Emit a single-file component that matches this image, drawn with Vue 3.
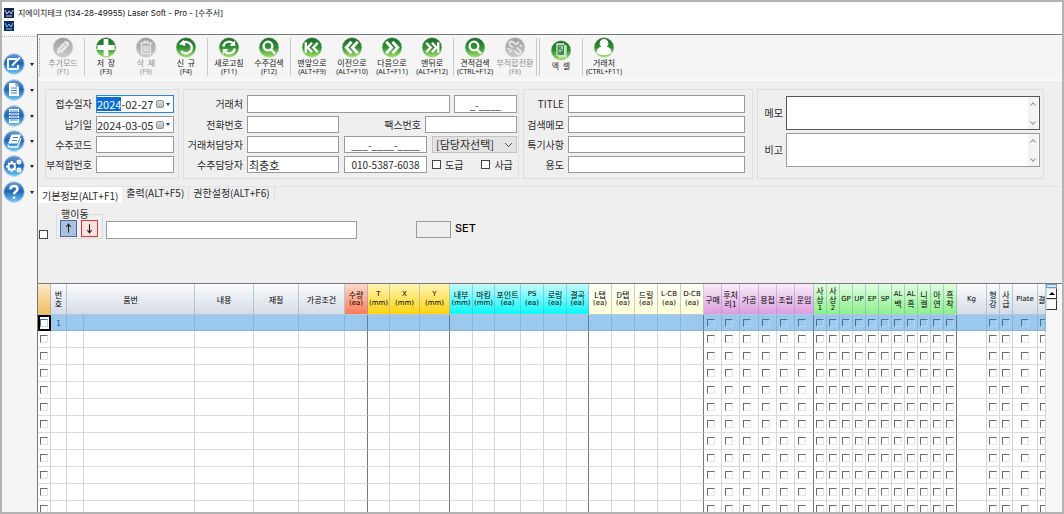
<script setup>
import { onMounted, ref } from 'vue'

const G = 'green'
const X = 'grey'
const tools = [
  { icon: 'pencil', tone: X, name: '추가모드', key: '(F1)' },
  { sep: 1 },
  { icon: 'plus', tone: G, name: '저  장', key: '(F3)' },
  { icon: 'trash', tone: X, name: '삭  제', key: '(F9)' },
  { icon: 'undo', tone: G, name: '신  규', key: '(F4)' },
  { sep: 1 },
  { icon: 'refresh', tone: G, name: '새로고침', key: '(F11)' },
  { icon: 'search', tone: G, name: '수주검색', key: '(F12)' },
  { sep: 1 },
  { icon: 'first', tone: G, name: '맨앞으로', key: '(ALT+F9)' },
  { icon: 'prev', tone: G, name: '이전으로', key: '(ALT+F10)' },
  { icon: 'next', tone: G, name: '다음으로', key: '(ALT+F11)' },
  { icon: 'last', tone: G, name: '맨뒤로', key: '(ALT+F12)' },
  { sep: 1 },
  { icon: 'search', tone: G, name: '견적검색', key: '(CTRL+F12)' },
  { icon: 'link', tone: X, name: '부적합전환', key: '(F8)' },
  { sep: 2 },
  { icon: 'excel', tone: G, name: '엑  셀', key: '' },
  { sep: 1 },
  { icon: 'user', tone: G, name: '거래처', key: '(CTRL+F11)' }
]

const glyphs = {
  pencil: { fill: 'M4.500 17.500 L5.500 12 L13 4.500 Q14.500 3.500 16.500 5.500 Q18.500 7.500 17.500 9 L10 16.500 Z', line: 'M12 6 L16 10 M8 13.500 L13 8.500', dark: true },
  plus: { fill: 'M8.500 2 H13.500 V8.500 H20 V13.500 H13.500 V20 H8.500 V13.500 H2 V8.500 H8.500 Z' },
  trash: { stroke: 'M4.500 6.500 H17.500 M9 6 V4.500 H13 V6 M6.500 7 V17.500 H15.500 V7 M9 9 V15.500 M11 9 V15.500 M13 9 V15.500', width: 1.4 },
  undo: { stroke: 'M8 6 A6 6 0 1 1 6 14.500', width: 2.6, fill: 'M3.500 7.500 L9 2.500 L10.500 9.500 Z' },
  refresh: { stroke: 'M5 10 A6 6 0 0 1 15 6.500 M17 12 A6 6 0 0 1 7 15.500', width: 2.4, fill: 'M17.500 3.500 V9.500 H11.500 Z M4.500 18.500 V12.500 H10.500 Z' },
  search: { stroke: 'M14.500 9.500 A4.600 4.600 0 1 1 5.300 9.500 A4.600 4.600 0 1 1 14.500 9.500 M13 13 L17.500 17.500', width: 2.4 },
  first: { stroke: 'M11 6 L6.500 11 L11 16 M17 6 L12.500 11 L17 16 M4.500 5.500 V16.500', width: 2.5 },
  prev: { stroke: 'M10.500 5 L5 11 L10.500 17 M17 5 L11.500 11 L17 17', width: 3 },
  next: { stroke: 'M11.500 5 L17 11 L11.500 17 M5 5 L10.500 11 L5 17', width: 3 },
  last: { stroke: 'M11 6 L15.500 11 L11 16 M5 6 L9.500 11 L5 16 M17.500 5.500 V16.500', width: 2.5 },
  link: { stroke: 'M8.500 11 L5.500 8 Q4.500 5 7 4.500 Q9 4.500 12 8 M10 14 L14 18 Q17.500 18 17 15 L13 11 M15 5 L12.500 8 M5 16 L8 13.500 M16 9 H18.500 M3.500 12.500 H6', width: 1.8 },
  excel: { fill: 'M6 3.500 H14.500 V5.500 H17 V18.500 H8 V16.500 H6 Z', line: 'M8 6 H13.500 V15 H8 Z M8.500 7 L11 10.500 M11 7 L8.500 10.500 M8.500 12.500 H13 M12 9 V14 M8.500 14 H13', dark: true },
  user: { fill: 'M11 2 A4.600 4.600 0 0 1 13.800 10.200 Q19 11 19 17 Q11 21 3 17 Q3 11 8.200 10.200 A4.600 4.600 0 0 1 11 2 Z' }
}

const menus = [
  { name: '작성', fill: '', stroke: 'M14 6 H6 Q5 6 5 7 V15 Q5 16 6 16 H14 Q15 16 15 15 V12 M9 12.500 L17 4.500', width: 2 },
  { name: '문서', fill: 'M6 4 H13 L16 7 V17 H6 Z', line: 'M8 9 H14 M8 11.500 H14 M8 14 H14 M13 4 V7 H16' },
  { name: '업체', fill: 'M6 4 H16 V18 H6 Z', line: 'M8 5 V16 M10 5 V16 M12 5 V16 M14 5 V16 M6 7.500 H16 M6 10.500 H16 M6 13.500 H16' },
  { name: '장부', fill: 'M8.500 4.500 H18 L14.500 13.500 H5 Z', stroke: 'M5 14.500 Q5 17 7 17 H14.500 L18 8', line: 'M10 7.500 H15 M9 10.500 H14', width: 1.3 },
  { name: '설정', stroke: 'M12 11.500 A3.300 3.300 0 1 1 5.400 11.500 A3.300 3.300 0 1 1 12 11.500 M17.500 7 A1.500 1.500 0 1 1 14.500 7 A1.500 1.500 0 1 1 17.500 7 M17.500 15 A1.500 1.500 0 1 1 14.500 15 A1.500 1.500 0 1 1 17.500 15 M8.700 6 V8 M8.700 15 V17 M3 11.500 H5 M5 8 L6.500 9.300 M5 15 L6.500 13.700 M12.500 8 L11 9.300 M12.500 15 L11 13.700', width: 2 },
  { name: '도움말', stroke: 'M7.500 8.500 Q7.500 5 11 5 Q14.500 5 14.500 8 Q14.500 9.500 12.500 10.800 Q11 11.800 11 13.300 M11 15.500 V17.800', width: 2.5 }
]

const cols = [
  { w: 13, t: [], c: 'amber', box: 1 },
  { w: 16, t: ['번', '호'] },
  { t: ['품번'], span: 2 },
  { w: 59, t: ['내용'] },
  { w: 45, t: ['재질'] },
  { w: 46, t: ['가공조건'] },
  { w: 23, t: ['수량', '(ea)'], c: 'red', end: 1 },
  { w: 22, t: ['T', '(mm)'], c: 'yellow' },
  { w: 30, t: ['X', '(mm)'], c: 'yellow' },
  { w: 30, t: ['Y', '(mm)'], c: 'yellow', end: 1 },
  { w: 23, t: ['내부', '(mm)'], c: 'cyan' },
  { w: 22, t: ['마킹', '(mm)'], c: 'cyan' },
  { w: 26, t: ['포인트', '(ea)'], c: 'cyan' },
  { w: 23, t: ['PS', '(ea)'], c: 'cyan' },
  { w: 23, t: ['로링', '(ea)'], c: 'cyan' },
  { w: 22, t: ['결곡', '(ea)'], c: 'cyan', end: 1 },
  { w: 23, t: ['L탭', '(ea)'], c: 'cream' },
  { w: 23, t: ['D탭', '(ea)'], c: 'cream' },
  { w: 23, t: ['드릴', '(ea)'], c: 'cream' },
  { w: 23, t: ['L-CB', '(ea)'], c: 'cream' },
  { w: 23, t: ['D-CB', '(ea)'], c: 'cream', end: 1 },
  { w: 18, t: ['구매'], c: 'violet', box: 1 },
  { w: 18, t: ['후처', '리1'], c: 'violet', box: 1 },
  { w: 19, t: ['가공'], c: 'violet', box: 1 },
  { w: 18, t: ['용접'], c: 'violet', box: 1 },
  { w: 18, t: ['조립'], c: 'violet', box: 1 },
  { w: 19, t: ['운임'], c: 'violet', box: 1, end: 1 },
  { w: 13, t: ['사', '상', '1'], c: 'lime', box: 1 },
  { w: 13, t: ['사', '상', '2'], c: 'lime', box: 1 },
  { w: 13, t: ['GP'], c: 'lime', box: 1 },
  { w: 13, t: ['UP'], c: 'lime', box: 1 },
  { w: 13, t: ['EP'], c: 'lime', box: 1 },
  { w: 13, t: ['SP'], c: 'lime', box: 1 },
  { w: 13, t: ['AL', '백'], c: 'lime', box: 1 },
  { w: 13, t: ['AL', '흑'], c: 'lime', box: 1 },
  { w: 13, t: ['니', '켈'], c: 'lime', box: 1 },
  { w: 13, t: ['아', '연'], c: 'lime', box: 1 },
  { w: 13, t: ['흑', '착'], c: 'lime', box: 1, end: 1 },
  { w: 30, t: ['Kg'] },
  { w: 13, t: ['형', '강'], box: 1 },
  { w: 13, t: ['사', '급'], box: 1 },
  { w: 25, t: ['Plate'], box: 1, mid: 1 },
  { w: 8, t: ['결'], box: 1, cut: 1 }
]
const isLatin = (s) => /^[\x20-\x7e]+$/.test(s)
const colStyle = (c) => (c.w ? { width: c.w + 'px' } : null)

const specs = ['TITLE', '검색메모', '특기사항', '용도']
const tabs = ['기본정보(ALT+F1)', '출력(ALT+F5)', '권한설정(ALT+F6)']

const received = ref('2024-02-27')
const due = ref('2024-03-05')
const receivedBox = ref(null)
onMounted(() => {
  receivedBox.value.focus()
  receivedBox.value.setSelectionRange(0, 4)
})
</script>

<template>
  <div class="window">
    <svg class="defs" width="0" height="0" aria-hidden="true">
      <defs>
        <linearGradient id="green" x1="0" y1="0" x2="0" y2="1">
          <stop offset="0" stop-color="#1d6a2d" /><stop offset=".5" stop-color="#2f9034" /><stop offset="1" stop-color="#a5e26a" />
        </linearGradient>
        <linearGradient id="grey" x1="0" y1="0" x2="0" y2="1">
          <stop offset="0" stop-color="#9d9d9d" /><stop offset="1" stop-color="#cccccc" />
        </linearGradient>
        <linearGradient id="blue" x1="0" y1="0" x2="0" y2="1">
          <stop offset="0" stop-color="#6f9fd4" /><stop offset=".45" stop-color="#1e63b4" /><stop offset="1" stop-color="#6fcdf8" />
        </linearGradient>
      </defs>
    </svg>

    <header class="titlebar">
      <div class="title">
        <svg class="app" viewBox="0 0 10 10"><rect width="10" height="10" fill="#14264f" /><path d="M1 2 L3 6 L5 3 L7 6 L9 2 M2 8 H8" stroke="#b9d3f5" stroke-width="1" fill="none" /></svg>
        <h1>지에이치테크 (134-28-49955) Laser Soft - Pro - [수주서]</h1>
      </div>
      <svg class="app" viewBox="0 0 10 10"><rect width="10" height="10" fill="#0d2c62" /><path d="M1 2 L3 6 L5 3 L7 6 L9 2 M2 8 H8" stroke="#7fc4f5" stroke-width="1" fill="none" /></svg>
    </header>

    <div class="body">
      <nav class="side">
        <button v-for="m in menus" :key="m.name" type="button" :aria-label="m.name">
          <svg class="orb" viewBox="0 0 22 22">
            <circle cx="11" cy="11" r="10.400" fill="url(#blue)" stroke="#c4d7ec" stroke-width="1" />
            <path v-if="m.fill" :d="m.fill" fill="#fff" />
            <path v-if="m.stroke" :d="m.stroke" fill="none" stroke="#fff" :stroke-width="m.width" />
            <path v-if="m.line" :d="m.line" fill="none" stroke="#3f7fc4" stroke-width="1" />
          </svg>
          <i class="caret"></i>
        </button>
      </nav>

      <main>
        <div class="toolbar" role="toolbar">
          <template v-for="(t, i) in tools" :key="i">
            <span v-if="t.sep" class="sep" :class="{ twin: t.sep === 2 }"></span>
            <button v-else type="button" :disabled="t.tone === 'grey'" :class="{ low: !t.key }">
              <svg class="disc" viewBox="0 0 22 22">
                <circle cx="11" cy="11" r="10.500" :fill="`url(#${t.tone})`" stroke="#dde8da" stroke-width=".6" />
                <path v-if="glyphs[t.icon].fill" :d="glyphs[t.icon].fill" :fill="t.tone === 'grey' ? '#e9e9e9' : t.icon === 'excel' ? '#c4e5c2' : '#fff'" />
                <path v-if="glyphs[t.icon].stroke" :d="glyphs[t.icon].stroke" fill="none" :stroke="t.tone === 'grey' ? '#e9e9e9' : '#fff'" :stroke-width="glyphs[t.icon].width" />
                <path v-if="glyphs[t.icon].line" :d="glyphs[t.icon].line" fill="none" :stroke="t.tone === 'grey' ? '#aaa' : '#28743a'" stroke-width="1" />
              </svg>
              <span>{{ t.name }}</span>
              <span class="key">{{ t.key }}</span>
            </button>
          </template>
        </div>

        <form class="forms" @submit.prevent>
          <fieldset class="card dates">
            <div class="line">
              <label for="received">접수일자</label>
              <span class="date on">
                <input id="received" ref="receivedBox" v-model="received" type="text" spellcheck="false">
                <button type="button" aria-label="접수일자 달력"><i class="cal"></i><i class="caret"></i></button>
              </span>
            </div>
            <div class="line">
              <label for="due">납기일</label>
              <span class="date">
                <input id="due" v-model="due" type="text">
                <button type="button" aria-label="납기일 달력"><i class="cal"></i><i class="caret"></i></button>
              </span>
            </div>
            <div class="line"><label for="code">수주코드</label><input id="code" class="box grow" type="text"></div>
            <div class="line"><label for="bad">부적합번호</label><input id="bad" class="box grow" type="text"></div>
          </fieldset>

          <fieldset class="card client">
            <div class="line">
              <label for="client">거래처</label><input id="client" class="box grow" type="text">
              <input class="box zip" type="text" value="_-____" aria-label="거래처 번호">
            </div>
            <div class="line">
              <label for="tel">전화번호</label><input id="tel" class="box half" type="text">
              <label class="grow" for="fax">팩스번호</label><input id="fax" class="box half" type="text">
            </div>
            <div class="line">
              <label for="cm">거래처담당자</label><input id="cm" class="box half" type="text">
              <input class="box phone" type="text" value="___-____-____" aria-label="거래처담당자 전화">
              <select class="grow" aria-label="담당자선택"><option>[담당자선택]</option></select>
            </div>
            <div class="line">
              <label for="om">수주담당자</label><input id="om" class="box half name" type="text" value="최충호">
              <input class="box phone" type="text" value="010-5387-6038" aria-label="수주담당자 전화">
              <span class="checks grow">
                <label><input class="tick" type="checkbox">도급</label>
                <label><input class="tick" type="checkbox">사급</label>
              </span>
            </div>
          </fieldset>

          <fieldset class="card specs">
            <div v-for="(s, i) in specs" :key="s" class="line">
              <label :for="'spec' + i">{{ s }}</label><input :id="'spec' + i" class="box grow" type="text">
            </div>
          </fieldset>

          <fieldset class="card memos">
            <div class="memo strong">
              <label for="memo">메모</label>
              <div class="area"><textarea id="memo"></textarea><span class="bar"><i class="up"></i><i class="down"></i></span></div>
            </div>
            <div class="memo">
              <label for="note">비고</label>
              <div class="area"><textarea id="note"></textarea><span class="bar"><i class="up"></i><i class="down"></i></span></div>
            </div>
          </fieldset>
        </form>

        <div class="tabs" role="tablist">
          <button v-for="(t, i) in tabs" :key="t" type="button" role="tab" :aria-selected="i === 0" :class="{ active: i === 0 }">{{ t }}</button>
        </div>

        <section class="tools">
          <input class="tick" type="checkbox" aria-label="전체 선택">
          <fieldset class="move">
            <legend>행이동</legend>
            <button type="button" class="go-up" aria-label="위로"><svg viewBox="0 0 14 14"><path d="M7 11 V3.500 M5 5.500 L7 3 L9 5.500" /></svg></button>
            <button type="button" class="go-down" aria-label="아래로"><svg viewBox="0 0 14 14"><path d="M7 3 V10.500 M5 8.500 L7 11 L9 8.500" /></svg></button>
          </fieldset>
          <input class="box find" type="text" aria-label="행 내용">
          <input id="set" class="box count" type="text">
          <label class="set" for="set">SET</label>
        </section>

        <section class="grid">
          <div class="sheet">
            <table>
              <colgroup>
                <template v-for="(c, i) in cols" :key="i">
                  <col v-if="c.span" class="mark">
                  <col :style="colStyle(c)">
                </template>
              </colgroup>
              <thead>
                <tr>
                  <th v-for="(c, i) in cols" :key="i" scope="col" :colspan="c.span || 1" :class="[c.c, { cut: c.cut }]">
                    <span v-for="(s, k) in c.t" :key="k" :class="{ latin: isLatin(s) }">{{ s }}</span>
                  </th>
                </tr>
              </thead>
              <tbody>
                <tr v-for="r in 12" :key="r" :class="{ picked: r === 1 }">
                  <template v-for="(c, i) in cols" :key="i">
                    <td v-if="c.span"></td>
                    <td :class="{ end: c.end, mid: c.mid, wide: c.c === 'violet', current: r === 1 && i === 0 }">
                      <input v-if="c.box" type="checkbox" :aria-label="(c.t.join('') || '선택') + ' ' + r">
                      <template v-else-if="i === 1 && r === 1">1</template>
                    </td>
                  </template>
                </tr>
              </tbody>
            </table>
          </div>
          <div class="scroll"><i class="split"></i><button type="button" aria-label="위로 스크롤"><i></i></button><i class="thumb"></i></div>
        </section>
      </main>
    </div>
  </div>
</template>

<style>
html, body { margin: 0; background: #b4b4b4; }
</style>

<style scoped>
* { box-sizing: border-box; }
.window {
  height: 100vh; display: flex; flex-direction: column; overflow: hidden;
  border: 2px solid #b4b4b4; background: #efefef; color: #2c2c2c;
  font: 10px/12px "Noto Sans CJK KR", "Noto Sans", sans-serif;
}
.defs { position: absolute; }
button, input, select, textarea { font: inherit; color: inherit; margin: 0; padding: 0; border-radius: 0; outline: none; }
button { background: none; border: 0; }
.titlebar { flex: none; height: 32px; background: #fff; padding: 3px 2px 0; }
.title { display: flex; align-items: center; gap: 4px; height: 16px; }
.title h1 { margin: 0; font: 8px/12px Inter, "Noto Sans CJK KR", sans-serif; color: #111; white-space: nowrap; }
.app { width: 10px; height: 10px; display: block; }
.body { flex: 1; min-height: 0; display: flex; }
.side { width: 35px; flex: none; background: #f5f5f5; padding-top: 19px; display: flex; flex-direction: column; gap: 4px; background-image: linear-gradient(90deg, #b5b5b5 50%, transparent 50%); background-size: 2px 1px; background-repeat: repeat-x; background-position: 0 2px; }
.side button { display: flex; align-items: center; gap: 5px; height: 22px; padding-left: 1px; }
.side button:nth-child(4), .side button:nth-child(5) { margin-top: -1px; }
.orb { width: 22px; height: 22px; display: block; }
.caret { width: 0; height: 0; border: 2px solid transparent; border-top: 3px solid #222; border-bottom: 0; }
main { flex: 1; min-width: 0; display: flex; flex-direction: column; border-left: 1px solid #777; border-top: 1px solid #777; }

.toolbar { flex: none; height: 46px; display: flex; padding: 2px 0 0 5px; background: #f5f5f5; border-bottom: 2px solid #fbfbfb; position: relative; }
.toolbar::before { content: ""; position: absolute; left: 1px; top: 3px; bottom: 3px; border-left: 1px dotted #aaa; }
.toolbar button { width: 40px; display: flex; flex-direction: column; align-items: center; font-size: 8px; line-height: 9px; white-space: pre; color: #222; }
.toolbar button:disabled { color: #8f8f8f; }
.toolbar .low { padding-top: 3px; }
.disc { width: 22px; height: 21px; flex: none; }
.key { font-family: "Noto Sans", sans-serif; font-size: 7px; }
.sep { flex: none; width: 1px; height: 38px; margin: 1px 1px 0; background: #c9c9c9; }
.sep.twin { width: 4px; background: none; border: 1px solid #c9c9c9; border-width: 0 1px; }

.forms { flex: none; display: flex; gap: 4px; padding: 8px 18px 0 7px; }
.card { margin: 0; min-width: 0; height: 90px; border: 1px solid #dedede; padding: 5px 2px 0 0; display: flex; flex-direction: column; gap: 3px; }
.line { display: flex; align-items: center; height: 17px; gap: 4px; }
.line:first-child { height: 18px; }
.line > label { text-align: right; white-space: nowrap; flex: none; }
.line > * { height: 100%; }
.line > label { height: auto; }
.grow { flex: 1 !important; min-width: 0; width: 0; }
.box { border: 1px solid #9a9a9a; background: #fff; }
.dates { width: 134px; padding-right: 4px; }
.dates .line > label { width: 46px; }
.date { flex: 1; min-width: 0; display: flex; align-items: center; border: 1px solid #9a9a9a; background: #fff; }
.date.on { border-color: #2a86dc; }
.date input { border: 0; background: none; flex: 1; min-width: 0; width: 0; height: 14px; font-size: 11px; }
.date input::selection { background: #0a6cd0; color: #fff; }
.date button { display: flex; align-items: center; gap: 2px; padding-right: 3px; }
.date .caret { border-top-color: #1e3f7d; }
.cal { width: 8px; height: 8px; border: 1px solid #8f8f9a; border-radius: 2px; background: linear-gradient(#ddd, #bbb); }
.client { width: 336px; padding-right: 1px; }
.client .line > label:first-child { width: 59px; }
.half { width: 92px; }
.zip { width: 63px; text-align: center; }
.phone { width: 83px; text-align: center; margin: 0 1px; }
.name { padding-left: 1px; font-size: 11px; }
select { appearance: none; border: 1px solid #c2c2c2; background: #e3e3e3; padding-left: 3px; font-size: 11px; line-height: 15px; background-image: linear-gradient(45deg, transparent 45%, #555 45% 60%, transparent 60%), linear-gradient(-45deg, transparent 45%, #555 45% 60%, transparent 60%); background-size: 4px 4px; background-repeat: no-repeat; background-position: right 7px center, right 4px center; }
.checks { display: flex; gap: 18px; align-items: center; }
.checks label { display: flex; align-items: center; gap: 4px; white-space: nowrap; }
.tick { appearance: none; width: 9px; height: 9px; border: 1px solid #444; background: #fff; flex: none; }
.specs { width: 230px; padding-right: 7px; }
.specs .line > label { width: 40px; }
.memos { flex: 1; padding: 6px 3px 0 5px; }
.memo { display: flex; align-items: center; height: 34px; gap: 3px; }
.memo label { width: 20px; text-align: right; }
.area { flex: 1; min-width: 0; display: flex; height: 100%; border: 1px solid #9a9a9a; background: #fff; }
.strong .area { border-color: #555; }
textarea { flex: 1; min-width: 0; border: 0; resize: none; background: none; }
.bar { width: 10px; margin-right: 1px; background: #f3f3f3; display: flex; flex-direction: column; justify-content: space-between; align-items: center; padding: 6px 0 5px; }
.bar i { width: 4px; height: 4px; border: solid #999; border-width: 1px 0 0 1px; transform: rotate(45deg); }
.bar .down { transform: rotate(225deg); }

.tabs { flex: none; display: flex; align-items: flex-start; height: 17px; margin-top: 7px; border-top: 1px solid #e4e4e4; }
.tabs button { height: 14px; padding: 0 4px 2px; border-right: 1px solid #dcdcdc; white-space: nowrap; }
.tabs .active { height: 16px; padding: 2px 4px 0; background: #fff; border: 0; }

.tools { flex: none; height: 80px; display: flex; align-items: flex-start; padding: 5px 0 0 1px; }
.tools > .tick { margin-top: 22px; }
.move { margin: 0 0 0 8px; padding: 0 3px; width: 47px; height: 31px; border: 1px solid #dcdcdc; display: flex; gap: 4px; }
.move legend { padding: 0 1px; margin-left: 0; line-height: 12px; }
.move button { width: 17px; height: 17px; border: 1px solid #4f6a95; background: #abc1e0; flex: none; }
.move .go-down { border-color: #cc3b3b; background: #fbe0de; }
.move svg { width: 15px; height: 15px; display: block; }
.move path { fill: none; stroke: #222; stroke-width: 1; }
.find { width: 251px; height: 18px; margin: 13px 0 0 3px; }
.count { width: 35px; height: 17px; margin: 13px 0 0 59px; background: #efefef; }
.set { margin: 14px 0 0 4px; font: 500 11px/13px Inter, "Liberation Sans", sans-serif; color: #000; }

.grid { flex: 1; min-height: 0; display: flex; border-top: 1px solid #777; background: #f6f6f6; }
.sheet { flex: 1; min-width: 0; overflow: hidden; background: #fff; }
table { width: 100%; table-layout: fixed; border-collapse: separate; border-spacing: 0; }
.mark { width: 17px; }
th { height: 31px; padding: 0; font-weight: 400; font-size: 8px; line-height: 9px; color: #000; background: linear-gradient(#fbfcfe, #d5dce6); border-right: 1px solid rgba(120, 150, 190, .45); border-bottom: 1px solid #b9c6d6; vertical-align: middle; white-space: nowrap; overflow: hidden; }
th span { display: block; margin: 0 -4px; text-align: center; }
th .latin { font: 7px/9px "DejaVu Sans", sans-serif; }
th.cut span { margin: 0; text-align: left; }
.amber { background: linear-gradient(#fdeacc, #f3bc60); }
.red { background: linear-gradient(#fdd8cb, #ff7b57); }
.yellow { background: linear-gradient(#fff4b4, #ffd30f); }
.cyan { background: linear-gradient(#c5fbfb, #09f7fb); }
.cream { background: linear-gradient(#fffff6, #fffed6); }
.violet { background: linear-gradient(#faeefa, #dd9ce0); }
.lime { background: linear-gradient(#e2fde0, #8df08c); }
td { height: 17px; padding: 0 0 0 2px; border-right: 1px solid #d6d6d6; border-bottom: 1px solid #dcdcdc; font-size: 8px; line-height: 9px; overflow: hidden; vertical-align: middle; }
td.wide { padding-left: 3px; }
td:nth-child(2) { padding: 0; text-align: center; color: #1d4f78; }
td.end { border-right-color: #777; }
td.mid { padding: 0; text-align: center; }
.picked td { height: 16px; background: #9bc9ee; border-right-color: #86b5db; border-bottom-color: #86b5db; }
.picked td.end { border-right-color: #5e7f9b; }
.picked td.current { background: #fff; border: 2px solid #000; padding: 0; }
td input { appearance: none; display: block; width: 8px; height: 8px; border: 1px solid #6b6b6b; border-right-color: #e6e6e6; border-bottom-color: #e6e6e6; }
td.mid input { margin: 0 auto; }
.picked input { border-color: #4f7290 #b5d7f1 #b5d7f1 #4f7290; }
.scroll { width: 16px; flex: none; display: flex; flex-direction: column; align-items: flex-start; }
.split { width: 11px; height: 4px; border: 1px solid #6f9cc4; background: #d5e6f5; }
.scroll button, .thumb { width: 11px; height: 11px; background: #f8f8f8; border: 1px solid #ddd; border-right-color: #333; border-bottom-color: #333; }
.scroll button i { display: block; width: 0; margin: 0 auto; border: 3px solid transparent; border-top: 0; border-bottom: 3px solid #000; }
</style>
